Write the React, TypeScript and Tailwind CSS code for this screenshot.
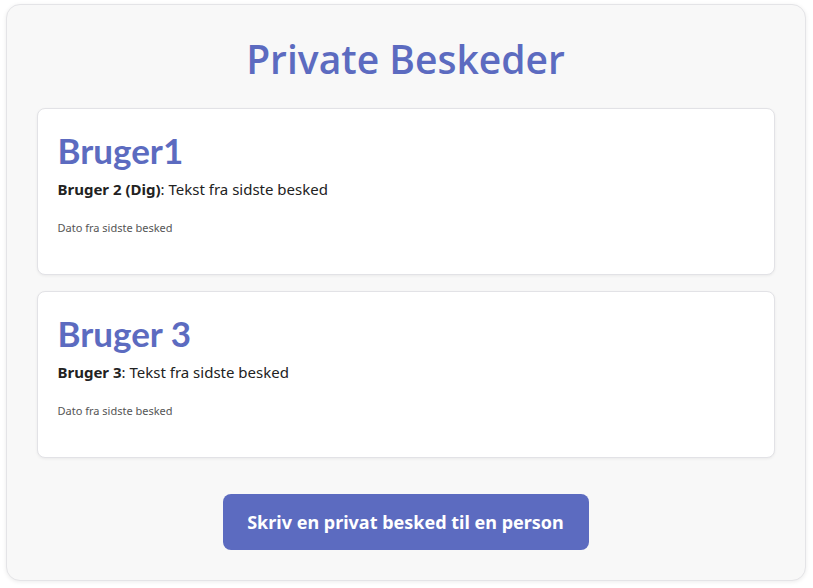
import React from "react";

const cards = [
  { name: "Bruger1", sender: "Bruger 2 (Dig)" },
  { name: "Bruger 3", sender: "Bruger 3" },
];

export default function App() {
  return (
    <div className="min-h-screen bg-white pt-1" style={{ fontFamily: '"Noto Sans", "Open Sans", sans-serif' }}>
      <div className="mx-auto w-[800px] -translate-x-px rounded-[14px] border border-[#e4e4e7] bg-[#f8f8f8] px-[30px] pt-[30px] pb-[30px] shadow-[0_1px_4px_rgba(0,0,0,0.08)]">
        <h1
          className="mb-[25px] text-center text-[39px] leading-[48px] font-semibold text-[#5c6bc0]"
          style={{ fontFamily: '"Open Sans", "Noto Sans", sans-serif' }}
        >
          Private Beskeder
        </h1>
        <div className="flex flex-col gap-4">
          {cards.map((c) => (
            <div
              key={c.name}
              className="rounded-[8px] border border-[#e2e2e6] bg-white px-5 pt-5 pb-5 shadow-[0_1px_3px_rgba(0,0,0,0.06)]"
            >
              <h2
                className="text-[35px] leading-[43px] font-bold text-[#5c6bc0]"
                style={{ fontFamily: 'Lato, "Noto Sans", sans-serif' }}
              >
                {c.name}
              </h2>
              <p className="mt-[5px] text-[15px] leading-[24px] text-[#222]">
                <span className="font-bold">{c.sender}</span>: Tekst fra sidste besked
              </p>
              <p className="mt-[19px] mb-[18px] text-[11px] leading-[16px] text-[#555]">Dato fra sidste besked</p>
            </div>
          ))}
        </div>
        <div className="mt-[36px] flex justify-center">
          <button className="h-[56px] w-[366px] rounded-[8px] bg-[#5c6bc0] text-[18px] font-bold text-white">
            Skriv en privat besked til en person
          </button>
        </div>
      </div>
    </div>
  );
}
